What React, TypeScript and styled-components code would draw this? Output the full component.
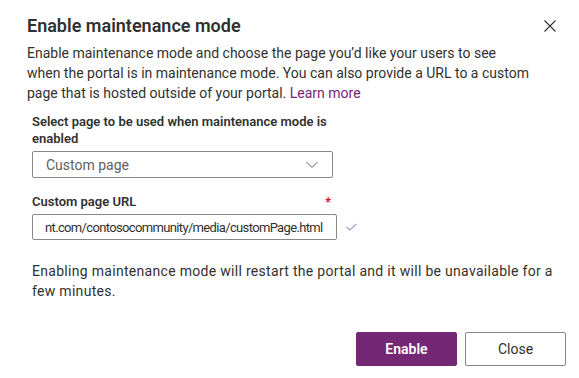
import React, { useState } from 'react';
import styled, { createGlobalStyle } from 'styled-components';

const GlobalStyle = createGlobalStyle`
  body {
    margin: 0;
    background: #ffffff;
    font-family: Roboto, "Liberation Sans", sans-serif;
    color: #323130;
  }
`;

export default function App() {
  const [page] = useState('Custom page');
  const [url, setUrl] = useState('nt.com/contosocommunity/media/customPage.html');

  return (
    <>
      <GlobalStyle />
      <Dialog>
        <Header>
          <Title>Enable maintenance mode</Title>
          <CloseButton aria-label="Close">
            <svg width="12" height="12" viewBox="0 0 12 12">
              <path d="M0.5 0.5 L11.5 11.5 M11.5 0.5 L0.5 11.5" stroke="#323130" strokeWidth="1.1" fill="none" />
            </svg>
          </CloseButton>
        </Header>
        <Description>
          Enable maintenance mode and choose the page you’d like your users to see when the portal is in
          maintenance mode. You can also provide a URL to a custom page that is hosted outside of your portal.{' '}
          <LearnMore href="#">Learn more</LearnMore>
        </Description>

        <Form>
          <Field $gap={10}>
            <Label>Select page to be used when maintenance mode is enabled</Label>
            <Dropdown>
              <span>{page}</span>
              <svg width="12" height="8" viewBox="0 0 12 8">
                <path d="M0.5 1 L6 6.5 L11.5 1" stroke="#605e5c" strokeWidth="1" fill="none" />
              </svg>
            </Dropdown>
          </Field>

          <Field $gap={15}>
            <LabelRow>
              <Label>Custom page URL</Label>
              <Required>*</Required>
            </LabelRow>
            <InputRow>
              <TextInput value={url} onChange={(e) => setUrl(e.target.value)} />
              <svg width="11" height="8" viewBox="0 0 11 8">
                <path d="M0.5 4 L3.8 7 L10.5 0.8" stroke="#b88fc8" strokeWidth="1.1" fill="none" />
              </svg>
            </InputRow>
          </Field>

          <Warning>
            Enabling maintenance mode will restart the portal and it will be unavailable for a few minutes.
          </Warning>
        </Form>

        <Footer>
          <PrimaryButton>Enable</PrimaryButton>
          <DefaultButton>Close</DefaultButton>
        </Footer>
      </Dialog>
    </>
  );
}

const Dialog = styled.div`
  width: 579px;
  height: 378px;
  box-sizing: border-box;
  padding: 13px 13px 0 27px;
`;

const Header = styled.div`
  display: flex;
  justify-content: space-between;
  align-items: center;
`;

const Title = styled.h1`
  margin: 0;
  font-size: 18px;
  font-weight: 600;
  line-height: 26px;
  color: #323130;
`;

const CloseButton = styled.button`
  display: flex;
  align-items: center;
  justify-content: center;
  width: 32px;
  height: 26px;
  padding: 0;
  border: none;
  background: transparent;
  cursor: pointer;
`;

const Description = styled.p`
  margin: 4px 34px 0 0;
  font-size: 14px;
  line-height: 20px;
`;

const LearnMore = styled.a`
  color: #742774;
  text-decoration: none;
`;

const Form = styled.div`
  padding-left: 5px;
`;

const Field = styled.div<{ $gap: number }>`
  display: flex;
  flex-direction: column;
  gap: 4px;
  margin-top: ${(p) => p.$gap}px;
`;

const Label = styled.label`
  width: 301px;
  font-size: 13px;
  font-weight: 600;
  line-height: 17px;
  color: #323130;
`;

const LabelRow = styled.div`
  display: flex;
  justify-content: space-between;
  width: 301px;
`;

const Required = styled.span`
  color: #e0001b;
  font-size: 13px;
  font-weight: 600;
  line-height: 17px;
  padding-right: 2px;
`;

const Dropdown = styled.div`
  display: flex;
  align-items: center;
  justify-content: space-between;
  width: 301px;
  height: 27px;
  box-sizing: border-box;
  padding: 0 14px 0 13px;
  border: 1px solid #8a8886;
  border-radius: 2px;
  font-size: 14px;
  color: #605e5c;
`;

const InputRow = styled.div`
  display: flex;
  align-items: center;
  gap: 9px;
`;

const TextInput = styled.input`
  width: 305px;
  height: 26px;
  box-sizing: border-box;
  padding: 0 8px 0 12px;
  border: 1px solid #8a8886;
  border-radius: 2px;
  font-family: Roboto, "Liberation Sans", sans-serif;
  font-size: 13px;
  letter-spacing: -0.65px;
  color: #323130;
  outline: none;
`;

const Warning = styled.p`
  margin: 21px 0 0;
  font-size: 14px;
  line-height: 20px;
  letter-spacing: 0.3px;
`;

const Footer = styled.div`
  display: flex;
  justify-content: flex-end;
  gap: 8px;
  margin-top: 31px;
`;

const BaseButton = styled.button`
  height: 34px;
  box-sizing: border-box;
  border-radius: 2px;
  font-family: Roboto, "Liberation Sans", sans-serif;
  font-size: 14px;
  cursor: pointer;
`;

const PrimaryButton = styled(BaseButton)`
  width: 101px;
  border: 1px solid #742774;
  background: #742774;
  color: #ffffff;
  font-weight: 600;
`;

const DefaultButton = styled(BaseButton)`
  width: 101px;
  border: 1px solid #8a8886;
  background: #ffffff;
  color: #323130;
  font-weight: 400;
`;
